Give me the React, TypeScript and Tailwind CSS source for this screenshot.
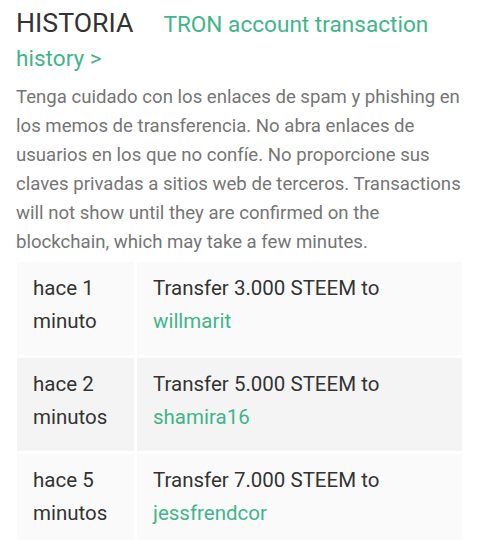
export default function App() {
  const rows = [
    { t1: "hace 1", t2: "minuto", amt: "3.000", to: "willmarit", bg: "bg-[#fafafa]" },
    { t1: "hace 2", t2: "minutos", amt: "5.000", to: "shamira16", bg: "bg-[#f4f4f4]" },
    { t1: "hace 5", t2: "minutos", amt: "7.000", to: "jessfrendcor", bg: "bg-[#fafafa]" },
  ];
  return (
    <div className="w-[480px] h-[540px] overflow-hidden bg-white font-['Roboto',sans-serif]">
      <div className="pl-4 pr-4 pt-[8px]">
        <div className="leading-[31.5px]">
          <span className="text-[26.7px] text-[#333333] mr-[30px]">HISTORIA</span>
          <span className="text-[22.6px] text-[#3fb58a]">TRON account transaction history &gt;</span>
        </div>
        <p className="mt-[7px] text-[18.6px] leading-[29px] text-[#757575]">
          Tenga cuidado con los enlaces de spam y phishing en los memos de transferencia. No abra enlaces de usuarios en los que no confíe. No proporcione sus claves privadas a sitios web de terceros. Transactions will not show until they are confirmed on the blockchain, which may take a few minutes.
        </p>
      </div>
      <div className="ml-[17px] w-[445px] mt-[5px] grid grid-cols-[117px_1fr] gap-[3px]">
        {rows.map((r, i) => (
          <div key={i} className="contents">
            <div className={`${r.bg} pl-4 pt-[10px] pb-[17px] text-[20.5px] leading-[33px] text-[#333333]`}>
              <div>{r.t1}</div>
              <div>{r.t2}</div>
            </div>
            <div className={`${r.bg} pl-4 pt-[10px] pb-[17px] text-[20.5px] leading-[33px] text-[#333333]`}>
              <div>Transfer {r.amt} STEEM to</div>
              <div className="text-[#3fb58a]">{r.to}</div>
            </div>
          </div>
        ))}
      </div>
    </div>
  );
}
